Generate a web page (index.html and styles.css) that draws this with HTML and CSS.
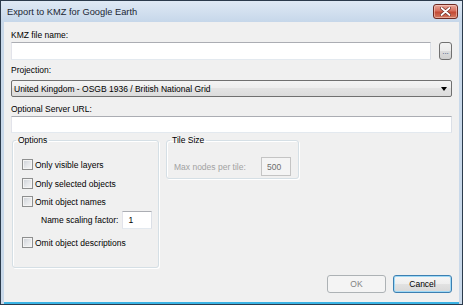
FILE: index.html
```html
<!DOCTYPE html>
<html lang="en">
<head>
    <meta charset="UTF-8">
    <title>Export to KMZ for Google Earth</title>
    <link rel="stylesheet" href="styles.css">
</head>
<body>
    <div class="window">
        <div class="titlebar">
            <span class="title">Export to KMZ for Google Earth</span>
            <button class="close" type="button">
                <svg width="11" height="9" viewBox="0 0 11 9">
                    <path d="M1.5 1 L9.5 8 M9.5 1 L1.5 8" stroke="#6b2a22" stroke-width="3.2" stroke-linecap="round"/>
                    <path d="M1.5 1 L9.5 8 M9.5 1 L1.5 8" stroke="#ffffff" stroke-width="1.8" stroke-linecap="round"/>
                </svg>
            </button>
        </div>

        <div class="client">
            <label class="caption caption-file">KMZ file name:</label>
            <div class="file-row">
                <input class="textbox file-input" type="text">
                <button class="browse" type="button">...</button>
            </div>

            <label class="caption caption-proj">Projection:</label>
            <div class="combo">
                <span class="combo-text">United Kingdom - OSGB 1936 / British National Grid</span>
                <span class="combo-arrow"></span>
            </div>

            <label class="caption caption-url">Optional Server URL:</label>
            <input class="textbox url-input" type="text">

            <div class="groups">
                <fieldset class="group options">
                    <legend>Options</legend>
                    <label class="check-row first"><span class="check"></span>Only visible layers</label>
                    <label class="check-row second"><span class="check"></span>Only selected objects</label>
                    <label class="check-row third"><span class="check"></span>Omit object names</label>
                    <div class="scale-row">
                        <span>Name scaling factor:</span>
                        <input class="textbox scale-input" type="text" value="1">
                    </div>
                    <label class="check-row last"><span class="check"></span>Omit object descriptions</label>
                </fieldset>

                <fieldset class="group tiles">
                    <legend>Tile Size</legend>
                    <div class="tile-row">
                        <span class="tile-label">Max nodes per tile:</span>
                        <input class="textbox tile-input" type="text" value="500" disabled>
                    </div>
                </fieldset>
            </div>

            <div class="buttons">
                <button class="btn" type="button" disabled>OK</button>
                <button class="btn btn-default" type="button">Cancel</button>
            </div>
        </div>
    </div>
</body>
</html>
```

FILE: styles.css
```css
* {
    margin: 0;
    padding: 0;
    box-sizing: border-box;
}

body {
    font-family: 'Liberation Sans', Arial, sans-serif;
    font-size: 8.5px;
    color: #000;
    background: #f0f0f0;
}

.window {
    width: 463px;
    height: 305px;
    display: flex;
    flex-direction: column;
    border: 1px solid #2c3b4c;
    background: #c9d9ea;
}

.titlebar {
    height: 21px;
    display: flex;
    align-items: center;
    justify-content: space-between;
    padding: 0 4px 0 6px;
    background: linear-gradient(#dfe9f4, #c6d7ea);
}

.title {
    font-size: 9.3px;
    color: #1b2633;
}

.close {
    width: 25px;
    height: 15px;
    border: 1px solid #6e2a22;
    border-radius: 3px;
    background: linear-gradient(#e7a89b 0%, #d7705f 45%, #c44a35 55%, #d27a62 100%);
    box-shadow: inset 0 0 0 1px rgba(255, 220, 210, 0.5);
    display: flex;
    align-items: center;
    justify-content: center;
}

.client {
    flex: 1;
    margin: 0 3px;
    display: flex;
    flex-direction: column;
    padding: 8px 7px 0;
    background: #f0f0f0;
    border-bottom: 2px solid #3ab3e4;
}

.caption {
    display: block;
    height: 11px;
    line-height: 11px;
    margin-bottom: 1px;
}

.caption-proj {
    margin-top: 5px;
    margin-bottom: 4px;
}

.caption-url {
    margin-top: 7px;
}

.textbox {
    font-family: inherit;
    font-size: 8.5px;
    background: #fff;
    border: 1px solid;
    border-color: #abadb3 #dbdfe6 #e3e9ef #e2e3ea;
    padding: 0 5px;
    outline: none;
}

.file-row {
    display: flex;
    gap: 8px;
    height: 18px;
}

.file-input {
    flex: 1;
    height: 18px;
}

.browse {
    width: 13px;
    height: 18px;
    display: flex;
    justify-content: center;
    align-items: flex-start;
    padding-top: 5px;
    border: 1px solid #707070;
    border-radius: 3px;
    background: linear-gradient(#f2f2f2 0%, #ebebeb 50%, #dddddd 50%, #cfcfcf 100%);
    font-family: inherit;
    font-size: 8px;
    line-height: 8px;
    color: #2b4a7a;
}

.combo {
    height: 17px;
    display: flex;
    align-items: center;
    justify-content: space-between;
    padding: 0 4px 0 2px;
    border: 1px solid #707070;
    border-radius: 2px;
    background: linear-gradient(#f4f4f4 0%, #ededed 50%, #e3e3e3 50%, #dcdcdc 100%);
}

.combo-arrow {
    width: 0;
    height: 0;
    border-left: 3.5px solid transparent;
    border-right: 3.5px solid transparent;
    border-top: 4px solid #000;
    margin-top: 1px;
}

.url-input {
    height: 17px;
}

.groups {
    display: flex;
    align-items: flex-start;
    margin: 2px 0 0 1px;
}

.group {
    border: 1px solid #d5dfe5;
    border-radius: 3px;
    box-shadow: inset 1px 1px 0 #fff, 1px 1px 0 #fff;
}

.group legend {
    line-height: 11px;
    height: 11px;
    padding: 0 2px;
    margin-left: 3px;
}

.options {
    width: 147px;
    padding: 12px 0 18px 0;
}

.check-row {
    display: flex;
    align-items: center;
    height: 13px;
    margin-left: 9px;
}

.second {
    margin-top: 6px;
}

.third {
    margin-top: 5px;
}

.last {
    margin-top: 7px;
}

.check {
    width: 11px;
    height: 11px;
    margin-right: 2px;
    border: 1px solid #8e8f8f;
    background: linear-gradient(135deg, #cbcfd5 0%, #e4e6e9 50%, #f7f7f7 100%);
    box-shadow: inset 0 0 0 1px #f4f4f4;
}

.scale-row {
    display: flex;
    align-items: center;
    gap: 4px;
    height: 18px;
    margin: 3px 0 0 28px;
}

.scale-input {
    width: 30px;
    height: 18px;
}

.tiles {
    width: 133px;
    margin-left: 7px;
    padding: 11px 0 2px 0;
}

.tile-row {
    display: flex;
    align-items: center;
    height: 19px;
    margin-left: 7px;
}

.tile-label {
    width: 87px;
    color: #a2a2a2;
}

.tile-input {
    width: 30px;
    height: 19px;
    background: #f4f4f4;
    border-color: #c4c4c4;
    color: #6d6d6d;
}

.buttons {
    display: flex;
    justify-content: flex-end;
    gap: 7px;
    margin-top: 7px;
}

.btn {
    width: 59px;
    height: 18px;
    font-family: inherit;
    font-size: 8.5px;
    border: 1px solid #707070;
    border-radius: 3px;
    background: linear-gradient(#f2f2f2 0%, #ebebeb 50%, #dddddd 50%, #cfcfcf 100%);
    color: #000;
}

.btn:disabled {
    border-color: #adb2b5;
    background: #f4f4f4;
    color: #838383;
}

.btn-default {
    border-color: #3c7fb1;
    background: linear-gradient(#f6f6f6 0%, #eeeeee 50%, #e2e2e2 50%, #d8d8d8 100%);
    box-shadow: inset 0 0 0 1px #9fd9f6;
}
```
